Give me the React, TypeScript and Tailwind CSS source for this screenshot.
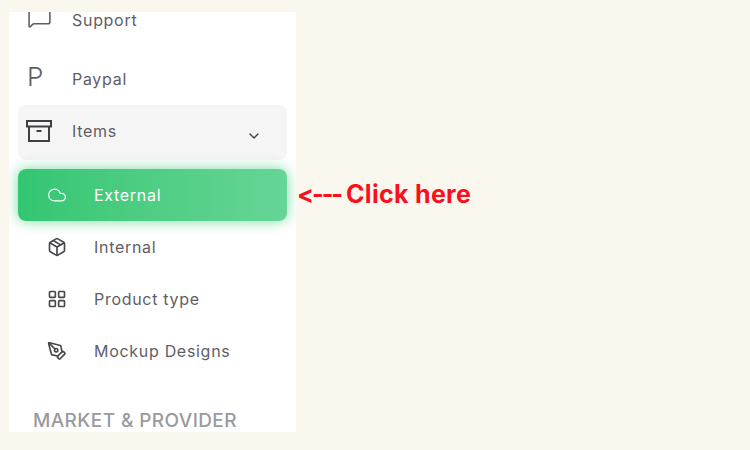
import { ChevronDown, Cloud, LayoutGrid, MessageSquare, Package, PenTool } from "lucide-react";

const font = "font-['Inter','Noto_Sans',sans-serif]";

const subItems = [
  { title: "Internal", Icon: Package },
  { title: "Product type", Icon: LayoutGrid },
  { title: "Mockup Designs", Icon: PenTool },
];

function StorageBox() {
  return (
    <svg viewBox="0 0 26 22" fill="none" stroke="currentColor" strokeWidth="2" className="h-[22px] w-[26px]">
      <rect x="1" y="1" width="24" height="5.5" />
      <path d="M3 6.5V21H23V6.5" />
      <path d="M10.5 11H15.5" />
    </svg>
  );
}

export default function App() {
  return (
    <div className={`${font} flex h-[450px] w-[750px] overflow-hidden bg-[#faf7ef] pl-[9px] pt-3`}>
      <aside className="h-[420px] w-[287px] overflow-hidden bg-white">
        <div className="-mt-[18px] px-[9px]">
          {/* Top level links */}
          <div className="mb-[6px] flex h-[52px] items-center pl-[9px] text-[#5e5e66]">
            <MessageSquare className="-mt-2 h-[25px] w-[25px]" strokeWidth={1.5} />
            <span className="ml-5 text-[16px] tracking-[0.7px]">Support</span>
          </div>
          <div className="flex h-[53px] items-center pl-[9px] text-[#5e5e66]">
            <span className="-mt-1 w-[25px] text-[26px] font-light leading-none">P</span>
            <span className="ml-5 text-[16px] tracking-[0.7px]">Paypal</span>
          </div>

          {/* Open group */}
          <div className="flex h-[55px] items-center rounded-lg bg-[#f5f5f5] pb-[4px] pl-[8px] pr-[25px] text-[#5e5e66]">
            <span className="flex text-[#3e3e44]">
              <StorageBox />
            </span>
            <span className="ml-[20px] flex-1 text-[16px] tracking-[0.7px]">Items</span>
            <ChevronDown className="mt-[11px] h-4 w-4 text-[#3e3e44]" strokeWidth={2} />
          </div>

          <div className="mt-[9px] flex h-[52px] items-center rounded-lg bg-gradient-to-r from-[#32c672] to-[#66d596] pl-[29px] text-white shadow-[0_0_14px_rgba(50,198,114,0.65)]">
            <Cloud className="h-[20px] w-[20px]" strokeWidth={1.5} />
            <span className="ml-[27px] text-[16px] tracking-[0.7px]">External</span>
          </div>

          {subItems.map(({ title, Icon }) => (
            <div key={title} className="flex h-[52px] items-center pl-[29px] text-[#5e5e66]">
              <Icon className="h-[20px] w-[20px] text-[#48484c]" strokeWidth={2} />
              <span className="ml-[27px] text-[16px] tracking-[0.7px]">{title}</span>
            </div>
          ))}

          <div className="mt-[34px] pl-[15px] text-[19px] font-medium leading-none tracking-[0.4px] text-[#9a9a9e]">MARKET &amp; PROVIDER</div>
        </div>
      </aside>

      {/* Annotation beside the panel */}
      <p className="ml-px mt-[170px] flex gap-[5px] whitespace-pre text-[25px] font-bold leading-none tracking-[0.3px] text-[#fb0f1d] [font-feature-settings:'calt'_0,'liga'_0]">
        <span className="tracking-[-2px]">{"<---"}</span>
        <span>Click here</span>
      </p>
    </div>
  );
}
